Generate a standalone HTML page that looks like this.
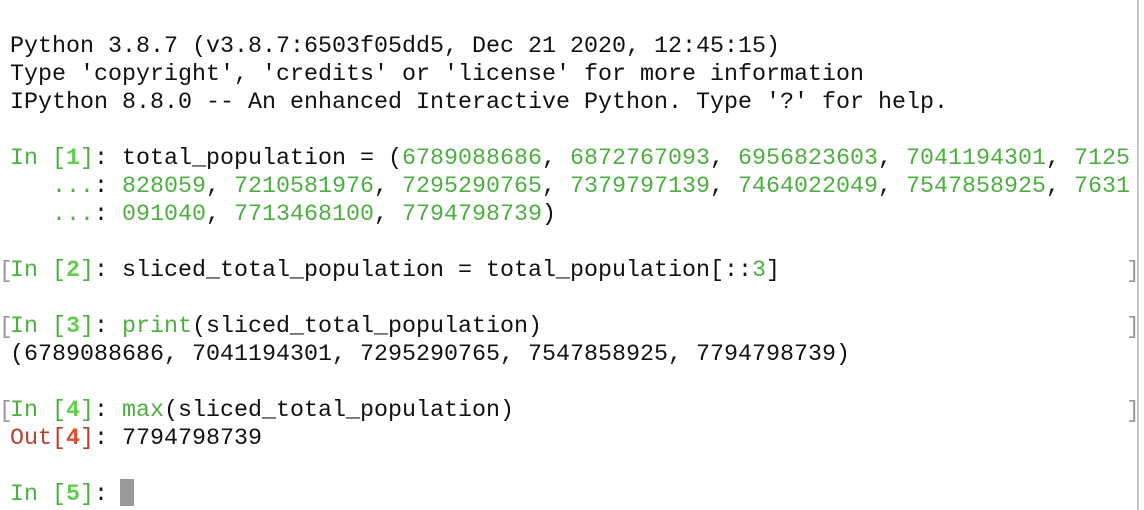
<!DOCTYPE html>
<html><head><meta charset="utf-8"><style>
html,body{margin:0;padding:0;background:#fff;width:1144px;height:510px;overflow:hidden;position:relative}
.l{position:absolute;left:10px;height:28px;line-height:28px;font-family:"Liberation Mono",monospace;font-size:23.33px;color:#111;white-space:pre}
.g{color:#4caf3f}.G{color:#5fd04c;font-weight:bold}.r{color:#b8402f}.R{color:#e04a2e;font-weight:bold}
.b{position:absolute;font-family:"Liberation Mono",monospace;font-size:23px;color:#999;line-height:28px;height:28px}
#vl{position:absolute;left:1137px;top:0;width:2px;height:510px;background:#c8c8c8}
#cur{position:absolute;left:120px;top:479px;width:14px;height:27px;background:#999}
</style></head><body>
<div class="l" style="top:33px">Python 3.8.7 (v3.8.7:6503f05dd5, Dec 21 2020, 12:45:15)</div>
<div class="l" style="top:61px">Type 'copyright', 'credits' or 'license' for more information</div>
<div class="l" style="top:89px">IPython 8.8.0 -- An enhanced Interactive Python. Type '?' for help.</div>
<div class="l" style="top:145px"><span class="g">In [</span><span class="G">1</span><span class="g">]</span>: total_population = (<span class="g">6789088686</span>, <span class="g">6872767093</span>, <span class="g">6956823603</span>, <span class="g">7041194301</span>, <span class="g">7125</span></div>
<div class="l" style="top:173px"><span class="g">   ...</span>: <span class="g">828059</span>, <span class="g">7210581976</span>, <span class="g">7295290765</span>, <span class="g">7379797139</span>, <span class="g">7464022049</span>, <span class="g">7547858925</span>, <span class="g">7631</span></div>
<div class="l" style="top:201px"><span class="g">   ...</span>: <span class="g">091040</span>, <span class="g">7713468100</span>, <span class="g">7794798739</span>)</div>
<div class="l" style="top:257px"><span class="g">In [</span><span class="G">2</span><span class="g">]</span>: sliced_total_population = total_population[::<span class="g">3</span>]</div>
<div class="l" style="top:313px"><span class="g">In [</span><span class="G">3</span><span class="g">]</span>: <span class="g">print</span>(sliced_total_population)</div>
<div class="l" style="top:341px">(6789088686, 7041194301, 7295290765, 7547858925, 7794798739)</div>
<div class="l" style="top:397px"><span class="g">In [</span><span class="G">4</span><span class="g">]</span>: <span class="g">max</span>(sliced_total_population)</div>
<div class="l" style="top:425px"><span class="r">Out[</span><span class="R">4</span><span class="r">]</span>: 7794798739</div>
<div class="l" style="top:481px"><span class="g">In [</span><span class="G">5</span><span class="g">]</span>: </div>
<div class="b" style="left:-1px;top:257px">[</div><div class="b" style="left:1126px;top:257px">]</div>
<div class="b" style="left:-1px;top:313px">[</div><div class="b" style="left:1126px;top:313px">]</div>
<div class="b" style="left:-1px;top:397px">[</div><div class="b" style="left:1126px;top:397px">]</div>
<div id="vl"></div>
<div id="cur"></div>
</body></html>
